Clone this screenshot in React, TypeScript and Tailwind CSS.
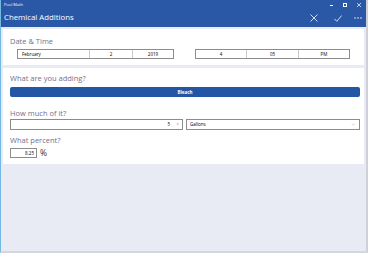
import { ChevronDown } from "lucide-react";

const font = { fontFamily: '"Open Sans", "Noto Sans", sans-serif' };

function Segment({ text, className }: { text: string; className: string }) {
  return (
    <div className={`flex items-center text-[4.5px] text-black ${className}`}>
      {text}
    </div>
  );
}

function Label({ text, className = "" }: { text: string; className?: string }) {
  return (
    <div className={`text-[7.5px] leading-[8px] text-[#707090] ${className}`}>{text}</div>
  );
}

function App() {
  return (
    <div
      className="w-[368px] h-[253px] flex flex-col bg-[#e8eaf4] border-l border-l-[#72b8e2] border-r-2 border-r-[#cfd0d8] border-b-2 border-b-[#d4d6e0] overflow-hidden"
      style={font}
    >
      {/* title bar + header */}
      <div className="h-[27px] bg-[#2a58a6] flex flex-col text-white shrink-0">
        <div className="h-[10px] flex items-center justify-between pl-[3px] pr-[5px]">
          <span className="text-[4px] leading-none">Pool Math</span>
          <div className="flex items-center gap-[10px] text-[5px] leading-none">
            <span className="w-[3px] h-[0.7px] bg-white" />
            <span className="w-[4px] h-[4px] border-[0.7px] border-white" />
            <svg width="4" height="4" viewBox="0 0 4 4" stroke="white" strokeWidth="0.7">
              <path d="M0 0L4 4M4 0L0 4" />
            </svg>
          </div>
        </div>
        <div className="flex-1 flex items-center justify-between pl-[3px] pr-[4px] pb-[1px]">
          <span className="text-[7.8px] leading-none">Chemical Additions</span>
          <div className="flex items-center">
            <svg width="8" height="8" viewBox="0 0 8 8" stroke="white" strokeWidth="0.8" fill="none">
              <path d="M0.5 0.5L7.5 7.5M7.5 0.5L0.5 7.5" />
            </svg>
            <svg width="8" height="7" viewBox="0 0 8 7" stroke="white" strokeWidth="0.8" fill="none" className="ml-[16px]">
              <path d="M0.3 3.8L2.8 6.3L7.7 0.5" />
            </svg>
            <svg width="8" height="2" viewBox="0 0 8 2" fill="white" className="ml-[12px]">
              <circle cx="1" cy="1" r="0.75" />
              <circle cx="4" cy="1" r="0.75" />
              <circle cx="7" cy="1" r="0.75" />
            </svg>
          </div>
        </div>
      </div>

      <div className="flex flex-col gap-[3px] pl-[2px] pr-[2px] pt-[2px]">
        {/* Date & Time */}
        <div className="bg-white h-[36px] pl-[7px] pt-[8px]">
          <Label text="Date & Time" />
          <div className="flex mt-[4px] pl-[7px]">
            <div className="flex w-[157px] h-[10px] border border-[#8c8c8c]">
              <Segment text="February" className="w-[72px] pl-[4px] border-r border-[#cacaca]" />
              <Segment text="2" className="w-[43px] justify-center border-r border-[#cacaca]" />
              <Segment text="2019" className="flex-1 justify-center" />
            </div>
            <div className="flex w-[155px] h-[10px] border border-[#8c8c8c] ml-[21px]">
              <Segment text="4" className="w-[51px] justify-center border-r border-[#cacaca]" />
              <Segment text="05" className="w-[52px] justify-center border-r border-[#cacaca]" />
              <Segment text="PM" className="flex-1 justify-center" />
            </div>
          </div>
        </div>

        {/* Chemical */}
        <div className="bg-white h-[96px] pl-[7px] pr-[4px] pt-[6px]">
          <Label text="What are you adding?" />
          <div className="mt-[5px] h-[10px] bg-[#2456a6] rounded-[2px] flex items-center justify-center text-white text-[4.5px] font-bold">
            Bleach
          </div>

          <Label text="How much of it?" className="mt-[12px]" />
          <div className="flex gap-[3px] mt-[2px]">
            <div className="w-[173px] h-[11px] border border-[#8c8c8c] flex items-center justify-end pr-[3px] gap-[6px] text-[4.5px]">
              <span>5</span>
              <span className="text-[#999] text-[5px]">×</span>
            </div>
            <div className="flex-1 h-[11px] border border-[#8c8c8c] flex items-center justify-between pl-[3px] pr-[3px] text-[4.5px]">
              <span>Gallons</span>
              <ChevronDown size={5} strokeWidth={1.5} className="text-[#777]" />
            </div>
          </div>

          <Label text="What percent?" className="mt-[6px]" />
          <div className="flex items-center mt-[4px] gap-[3px]">
            <div className="w-[27px] h-[10px] border border-[#8c8c8c] flex items-center justify-end pr-[2px] text-[4.5px]">
              8.25
            </div>
            <span className="text-[8.5px] leading-none text-[#333]">%</span>
          </div>
        </div>
      </div>
    </div>
  );
}

export default App;
